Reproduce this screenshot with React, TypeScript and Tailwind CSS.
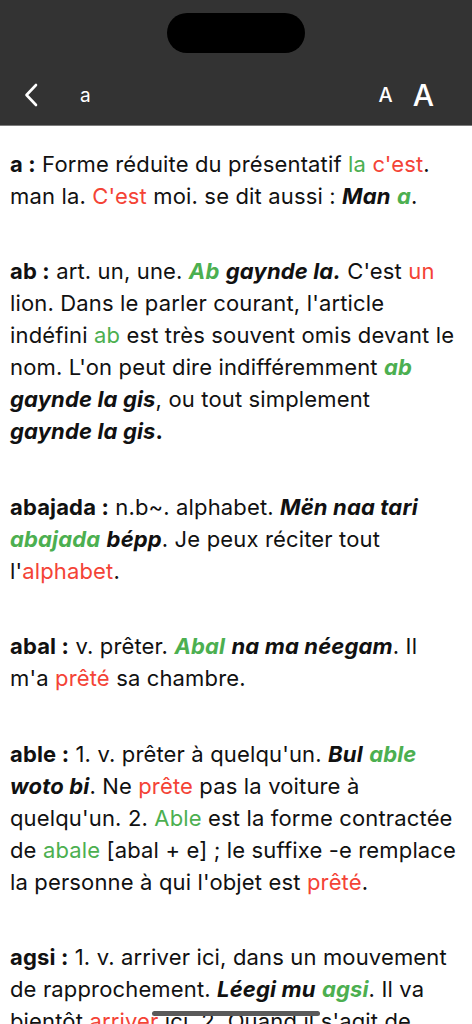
import React from "react";

const G = ({ children }: { children: React.ReactNode }) => (
  <span className="text-[#4caf50]">{children}</span>
);
const R = ({ children }: { children: React.ReactNode }) => (
  <span className="text-[#f44336]">{children}</span>
);
const BI = ({ children }: { children: React.ReactNode }) => (
  <span className="font-bold italic">{children}</span>
);
const H = ({ children }: { children: React.ReactNode }) => (
  <span className="font-bold">{children}</span>
);

function Entry({ children }: { children: React.ReactNode }) {
  return <p className="mb-[43.4px]">{children}</p>;
}

export default function App() {
  return (
    <div
      className="relative h-[1024px] w-[472px] overflow-hidden bg-white"
      style={{ fontFamily: "Inter, 'Noto Sans', sans-serif" }}
    >
      <header className="h-[126px] bg-[#333333] border-b border-[#7c7c7c] pt-[13px]">
        <div className="mx-auto h-[40px] w-[138px] rounded-full bg-black" />
        <div className="mt-[22px] flex h-[40px] items-center px-[24px]">
          <svg width="14" height="24" viewBox="0 0 14 24" className="shrink-0">
            <polyline
              points="12,2 2.5,12 12,22"
              fill="none"
              stroke="white"
              strokeWidth="2.6"
              strokeLinecap="round"
              strokeLinejoin="round"
            />
          </svg>
          <span className="ml-[42px] text-[19px] text-white leading-none">a</span>
          <div className="ml-auto flex items-center gap-[20px] pr-[14px]">
            <span className="text-[20px] leading-none text-white font-medium">A</span>
            <span className="text-[30px] leading-none text-white font-medium">A</span>
          </div>
        </div>
      </header>

      <main className="pl-[10px] pr-[13px] pt-[22px] text-[22px] leading-[32px] tracking-[0.15px] text-[#111]">
        <Entry>
          <H>a :</H> Forme réduite du présentatif <G>la</G> <R>c'est</R>. man la.{" "}
          <R>C'est</R> moi. se dit aussi : <BI>Man</BI>{" "}
          <BI>
            <G>a</G>
          </BI>
          .
        </Entry>
        <Entry>
          <H>ab :</H> art. un, une.{" "}
          <BI>
            <G>Ab</G>
          </BI>{" "}
          <BI>gaynde la.</BI> C'est <R>un</R> lion. Dans le parler courant, l'article
          indéfini <G>ab</G> est très souvent omis devant le nom. L'on peut dire
          indifféremment{" "}
          <BI>
            <G>ab</G> gaynde la gis
          </BI>
          , ou tout simplement{" "}
          <span className="whitespace-nowrap">
            <BI>gaynde la gis</BI>
            <H>.</H>
          </span>
        </Entry>
        <Entry>
          <H>abajada :</H> n.b~. alphabet. <BI>Mën naa tari</BI>{" "}
          <BI>
            <G>abajada</G>
          </BI>{" "}
          <BI>bépp</BI>. Je peux réciter tout l'<R>alphabet</R>.
        </Entry>
        <Entry>
          <H>abal :</H> v. prêter.{" "}
          <BI>
            <G>Abal</G>
          </BI>{" "}
          <BI>na ma néegam</BI>. Il m'a <R>prêté</R> sa chambre.
        </Entry>
        <Entry>
          <H>able :</H> 1. v. prêter à quelqu'un. <BI>Bul</BI>{" "}
          <BI>
            <G>able</G>
          </BI>{" "}
          <BI>woto bi</BI>. Ne <R>prête</R> pas la voiture à quelqu'un. 2.{" "}
          <G>Able</G> est la forme contractée de <G>abale</G> [abal + e] ; le suffixe
          -e remplace la personne à qui l'objet est <R>prêté</R>.
        </Entry>
        <Entry>
          <H>agsi :</H> 1. v. arriver ici, dans un mouvement de rapprochement.{" "}
          <BI>Léegi mu</BI>{" "}
          <BI>
            <G>agsi</G>
          </BI>
          . Il va bientôt <R>arriver</R> ici. 2. Quand il s'agit de personnes, on
          dit aussi <G>agsi</G> pour signifier venir.
        </Entry>
      </main>

      <div className="absolute bottom-[8px] left-[152px] h-[5px] w-[168px] rounded-full bg-[#5a5a5a]" />
    </div>
  );
}
